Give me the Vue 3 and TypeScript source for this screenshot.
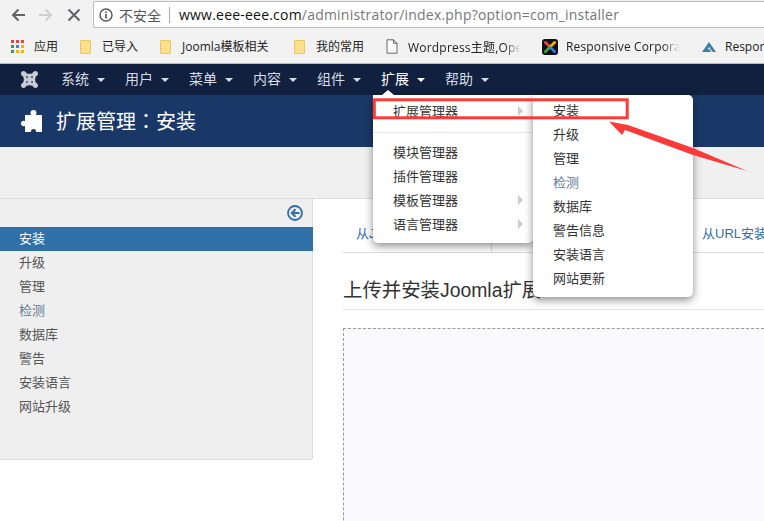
<script setup lang="ts">
const bookmarks = [
  { label: '已导入', w: 80 },
  { label: 'Joomla模板相关', w: 134 },
  { label: '我的常用', w: 92 },
]
const nav = ['系统', '用户', '菜单', '内容', '组件', '扩展', '帮助']
const side = ['安装', '升级', '管理', '检测', '数据库', '警告', '安装语言', '网站升级']
const menuTop = [{ t: '扩展管理器', arrow: true }]
const menuBottom = [
  { t: '模块管理器', arrow: false },
  { t: '插件管理器', arrow: false },
  { t: '模板管理器', arrow: true },
  { t: '语言管理器', arrow: true },
]
const sub = ['安装', '升级', '管理', '检测', '数据库', '警告信息', '安装语言', '网站更新']
const appColors = ['#e8453c', '#e8453c', '#e8453c', '#2f9e58', '#3b82e6', '#f4b400', '#2f9e58', '#f4b400', '#f4b400']
</script>

<template>
  <div class="page">
    <div class="addr-row">
      <svg class="nav-ic first" width="16" height="16" viewBox="0 0 16 16"><path d="M15 8H3M8.500 2.500 3 8l5.500 5.500" fill="none" stroke="#5f6368" stroke-width="2"/></svg>
      <svg class="nav-ic" width="16" height="16" viewBox="0 0 16 16"><path d="M1 8h12M7.500 2.500 13 8l-5.500 5.500" fill="none" stroke="#cfd0d1" stroke-width="2"/></svg>
      <svg class="nav-ic" width="16" height="16" viewBox="0 0 16 16"><path d="M2.500 2.500l11 11M13.500 2.500l-11 11" fill="none" stroke="#5f6368" stroke-width="2"/></svg>
      <div class="omni">
        <svg width="14" height="14" viewBox="0 0 14 14"><circle cx="7" cy="7" r="6" fill="none" stroke="#555" stroke-width="1.400"/><path d="M7 6v4.400M7 3.400v1.500" stroke="#555" stroke-width="1.600"/></svg>
        <span class="insecure">不安全</span>
        <span class="sep"></span>
        <span class="url"><b>www.eee-eee.com</b>/administrator/index.php?option=com_installer</span>
      </div>
    </div>

    <div class="bm-row">
      <div class="bm apps">
        <span class="grid"><i v-for="(c, i) in appColors" :key="i" :style="{ background: c }"></i></span>
        <span class="bm-t">应用</span>
      </div>
      <div v-for="b in bookmarks" :key="b.label" class="bm" :style="{ width: b.w + 'px' }">
        <span class="folder"></span><span class="bm-t">{{ b.label }}</span>
      </div>
      <div class="bm w-page">
        <svg width="12" height="15" viewBox="0 0 12 15"><path d="M1 .8h6.500L11 4.300v9.900H1zM7.500.8v3.500H11" fill="#fff" stroke="#666"/></svg>
        <span class="fade page-t">Wordpress主题,Ope</span>
      </div>
      <div class="bm w-resp">
        <span class="jbox"><svg width="14" height="14" viewBox="0 0 14 14"><path d="M7 7 3 3" stroke="#e8453c" stroke-width="2.600"/><path d="M7 7l4-4" stroke="#f4b400" stroke-width="2.600"/><path d="M7 7l-4 4" stroke="#3fa34d" stroke-width="2.600"/><path d="M7 7l4 4" stroke="#2f7fe0" stroke-width="2.600"/><circle cx="2.500" cy="2.500" r="1.600" fill="#e8453c"/><circle cx="11.500" cy="2.500" r="1.600" fill="#f4b400"/><circle cx="2.500" cy="11.500" r="1.600" fill="#3fa34d"/><circle cx="11.500" cy="11.500" r="1.600" fill="#2f7fe0"/></svg></span>
        <span class="fade resp-t">Responsive Corpora</span>
      </div>
      <div class="bm w-last">
        <svg width="14" height="10" viewBox="0 0 14 10"><path d="M7 0l7 10h-3.200L7 5 5.500 7.200H8L9 10H0z" fill="#3d7ea6"/></svg>
        <span>Respor</span>
      </div>
    </div>

    <nav class="navbar">
      <svg class="logo" width="17" height="17" viewBox="0 0 17 17">
        <path fill="#c9ccd3" d="M2.500 0C4 0 5 1 5.500 2.200 7.500 3 9.500 3 11.500 2.200 12 1 13 0 14.500 0 16 0 17 1 17 2.500 17 4 16 5 14.800 5.500 14 7.500 14 9.500 14.800 11.500 16 12 17 13 17 14.500 17 16 16 17 14.500 17 13 17 12 16 11.500 14.800 9.500 14 7.500 14 5.500 14.800 5 16 4 17 2.500 17 1 17 0 16 0 14.500 0 13 1 12 2.200 11.500 3 9.500 3 7.500 2.200 5.500 1 5 0 4 0 2.500 0 1 1 0 2.500 0z"/>
        <g fill="#4a5d7e"><circle cx="6" cy="6" r="1.100"/><circle cx="11" cy="6" r="1.100"/><circle cx="6" cy="11" r="1.100"/><circle cx="11" cy="11" r="1.100"/></g>
      </svg>
      <span v-for="n in nav" :key="n" class="nav-item" :class="{ on: n === '扩展' }">{{ n }}<i class="caret"></i></span>
    </nav>

    <header class="title-bar">
      <svg width="21" height="22" viewBox="0 0 21 22">
        <rect x="4" y="5" width="17" height="17" fill="#fff"/>
        <circle cx="12.500" cy="3" r="3" fill="#fff"/>
        <circle cx="2.700" cy="13.500" r="2.700" fill="#fff"/>
        <circle cx="12.500" cy="21.500" r="2.600" fill="#1a3867"/>
      </svg>
      <h1>扩展管理：安装</h1>
    </header>

    <div class="toolbar"></div>

    <main class="main">
      <aside class="sidebar">
        <div class="collapse">
          <svg width="16" height="16" viewBox="0 0 16 16"><circle cx="8" cy="8" r="7" fill="none" stroke="#2f70a9" stroke-width="1.800"/><path d="M12.500 8H5M8.500 4.300 4.800 8l3.700 3.700" fill="none" stroke="#2f70a9" stroke-width="2"/></svg>
        </div>
        <div v-for="(s, i) in side" :key="s" class="side-item" :class="{ on: i === 0 }">{{ s }}</div>
      </aside>
      <section class="content">
        <div class="tabs">
          <span class="tab active">从JED安装</span>
          <span class="tab url-tab">从URL安装</span>
        </div>
        <h2>上传并安装Joomla扩展</h2>
        <div class="drop"></div>
      </section>
    </main>

    <div class="menu">
      <div v-for="m in menuTop" :key="m.t" class="m-item">{{ m.t }}<i class="m-arrow"></i></div>
      <div class="divider"></div>
      <div v-for="m in menuBottom" :key="m.t" class="m-item">{{ m.t }}<i v-if="m.arrow" class="m-arrow"></i></div>
    </div>
    <div class="submenu">
      <div v-for="s in sub" :key="s" class="s-item">{{ s }}</div>
    </div>

    <svg class="annot" width="764" height="521" viewBox="0 0 764 521">
      <rect x="374.300" y="99.800" width="252.900" height="18" fill="none" stroke="#fb3a3a" stroke-width="3"/>
      <path d="M609 121.500 628 125 693 148 747 171 693 155 625 130 622 135z" fill="#fb3a3a"/>
    </svg>
  </div>
</template>

<style scoped>
.page {
  position: relative;
  width: 764px;
  height: 521px;
  overflow: hidden;
  background: #fff;
  font-family: "Noto Sans CJK SC", "Open Sans", sans-serif;
  font-size: 13px;
  color: #333;
}
.addr-row {
  height: 30px;
  background: #f2f2f2;
  display: flex;
  align-items: center;
  box-sizing: border-box;
  padding: 1px 0 2px;
}
.nav-ic { margin-right: 12px; flex: none; }
.nav-ic.first { margin-left: 10px; }
.omni {
  margin-left: -1px;
  flex: 1;
  height: 27px;
  box-sizing: border-box;
  background: #fff;
  border: 1px solid #bdbdbd;
  border-right: 0;
  border-radius: 2px 0 0 2px;
  display: flex;
  align-items: center;
  padding-left: 5px;
  white-space: nowrap;
}
.insecure { margin-left: 6px; font-size: 14px; color: #555; }
.sep { width: 1px; height: 16px; background: #aaa; margin: 0 9px 0 8px; }
.url { font-family: "Open Sans", sans-serif; font-size: 14px; letter-spacing: 0.21px; color: #777; }
.url b { font-weight: 400; color: #111; }
.bm-row {
  height: 33px;
  background: #f2f2f2;
  border-bottom: 1px solid #bcbcbc;
  display: flex;
  align-items: center;
  font-family: "Open Sans", "Noto Sans CJK SC", sans-serif;
  font-size: 12px;
  color: #222;
  white-space: nowrap;
  overflow: hidden;
  padding-left: 11px;
}
.bm { display: flex; align-items: center; flex: none; }
.bm-t { padding-bottom: 1px; }
.apps { width: 69px; gap: 10px; }
.grid { display: grid; grid-template-columns: repeat(3, 3px); gap: 2px; }
.grid i { width: 3px; height: 3px; display: block; }
.folder {
  width: 11px;
  height: 14px;
  background: #fbe08e;
  border: 1px solid #eec65a;
  border-radius: 1px;
  margin-right: 11px;
  flex: none;
  box-sizing: border-box;
}
.w-page { width: 156px; gap: 10px; }
.w-resp { width: 160px; gap: 8px; }
.w-last { gap: 9px; }
.fade {
  display: block;
  overflow: hidden;
  -webkit-mask-image: linear-gradient(90deg, #000 85%, transparent);
  mask-image: linear-gradient(90deg, #000 85%, transparent);
}
.page-t { width: 113px; letter-spacing: 0.2px; }
.resp-t { width: 114px; letter-spacing: 0.15px; }
.jbox {
  width: 16px; height: 16px; background: #111; border-radius: 3px;
  display: flex; align-items: center; justify-content: center; flex: none;
}
.navbar {
  height: 31px;
  background: #10203e;
  display: flex;
  align-items: center;
  color: #d9dce2;
  font-size: 14px;
  padding-left: 21px;
}
.logo { margin-right: 23px; margin-bottom: 1px; flex: none; }
.nav-item { display: flex; align-items: center; margin-right: 20px; margin-bottom: 3px; white-space: nowrap; }
.nav-item.on { color: #fff; }
.caret {
  width: 0; height: 0;
  border-left: 4px solid transparent;
  border-right: 4px solid transparent;
  border-top: 4px solid currentColor;
  margin-left: 8px;
  margin-top: 3px;
}
.title-bar {
  height: 52px;
  background: #1a3867;
  display: flex;
  align-items: center;
  padding-left: 21px;
  color: #fff;
  gap: 14px;
}
h1 { margin: 0 0 2px; font-family: "Noto Sans CJK TC", sans-serif; font-size: 20px; font-weight: 400; }
.toolbar {
  height: 51px;
  background: #f0f0f0;
  border-bottom: 1px solid #dcdcdc;
}
.main { display: flex; align-items: flex-start; }
.sidebar {
  width: 312px;
  height: 260px;
  background: #efefef;
  border-right: 1px solid #dcdcdc;
  border-bottom: 1px solid #dcdcdc;
  border-radius: 0 0 3px 0;
  flex: none;
}
.collapse { height: 28px; display: flex; justify-content: flex-end; align-items: center; padding-right: 9px; }
.side-item { height: 24px; line-height: 21px; padding-left: 19px; font-size: 13px; color: #555; }
.side-item:nth-child(5) { color: #5f7b92; }
.side-item.on { background: #2f70a9; color: #fff; margin-right: -1px; }
.content { flex: 1; padding-left: 30px; min-width: 0; }
.tabs {
  height: 54px;
  border-bottom: 1px solid #ddd;
  box-sizing: border-box;
  position: relative;
  color: #2f70a9;
  font-family: "Liberation Sans", "Noto Sans CJK SC", sans-serif;
  font-size: 13px;
}
.tab { position: absolute; top: 25px; line-height: 20px; white-space: nowrap; }
.tab.active {
  left: 0;
  top: 6px;
  width: 149px;
  height: 47px;
  box-sizing: border-box;
  padding: 19px 0 0 13px;
  border-right: 1px solid #ddd;
}
.url-tab { left: 359px; }
h2 {
  margin: 0;
  height: 56px;
  line-height: 74px;
  font-family: "Liberation Sans", "Noto Sans CJK SC", sans-serif;
  font-size: 19.400px;
  font-weight: 400;
  color: #333;
  white-space: nowrap;
  border-bottom: 1px solid #e5e5e5;
  overflow: hidden;
}
.drop {
  margin: 18px -10px 0 0;
  height: 300px;
  background: #fafafc;
  border: 1px dashed #9a9a9a;
}
.menu, .submenu {
  position: absolute;
  top: 95px;
  background: #fff;
  box-shadow: 0 3px 8px rgba(0, 0, 0, .45);
  font-size: 13px;
  color: #333;
}
.menu { left: 373px; width: 160px; height: 148px; border-radius: 0 0 5px 5px; padding-top: 4px; box-sizing: border-box; }
.menu::before {
  content: "";
  position: absolute;
  left: 9px;
  top: -5px;
  border-left: 6px solid transparent;
  border-right: 6px solid transparent;
  border-bottom: 5px solid #fff;
}
.submenu { left: 533px; width: 160px; height: 202px; border-radius: 0 5px 5px 5px; padding-top: 3px; box-sizing: border-box; }
.m-item { height: 24px; line-height: 24px; padding-left: 20px; position: relative; }
.s-item { height: 24px; line-height: 24px; padding-left: 20px; }
.s-item:nth-child(4) { color: #5f7b92; }
.divider { height: 1px; background: #e8e8e8; margin: 9px 0 7px; }
.m-arrow {
  position: absolute;
  right: 10px;
  top: 7px;
  border-left: 5px solid #ccc;
  border-top: 5px solid transparent;
  border-bottom: 5px solid transparent;
}
.annot { position: absolute; left: 0; top: 0; pointer-events: none; }
</style>
